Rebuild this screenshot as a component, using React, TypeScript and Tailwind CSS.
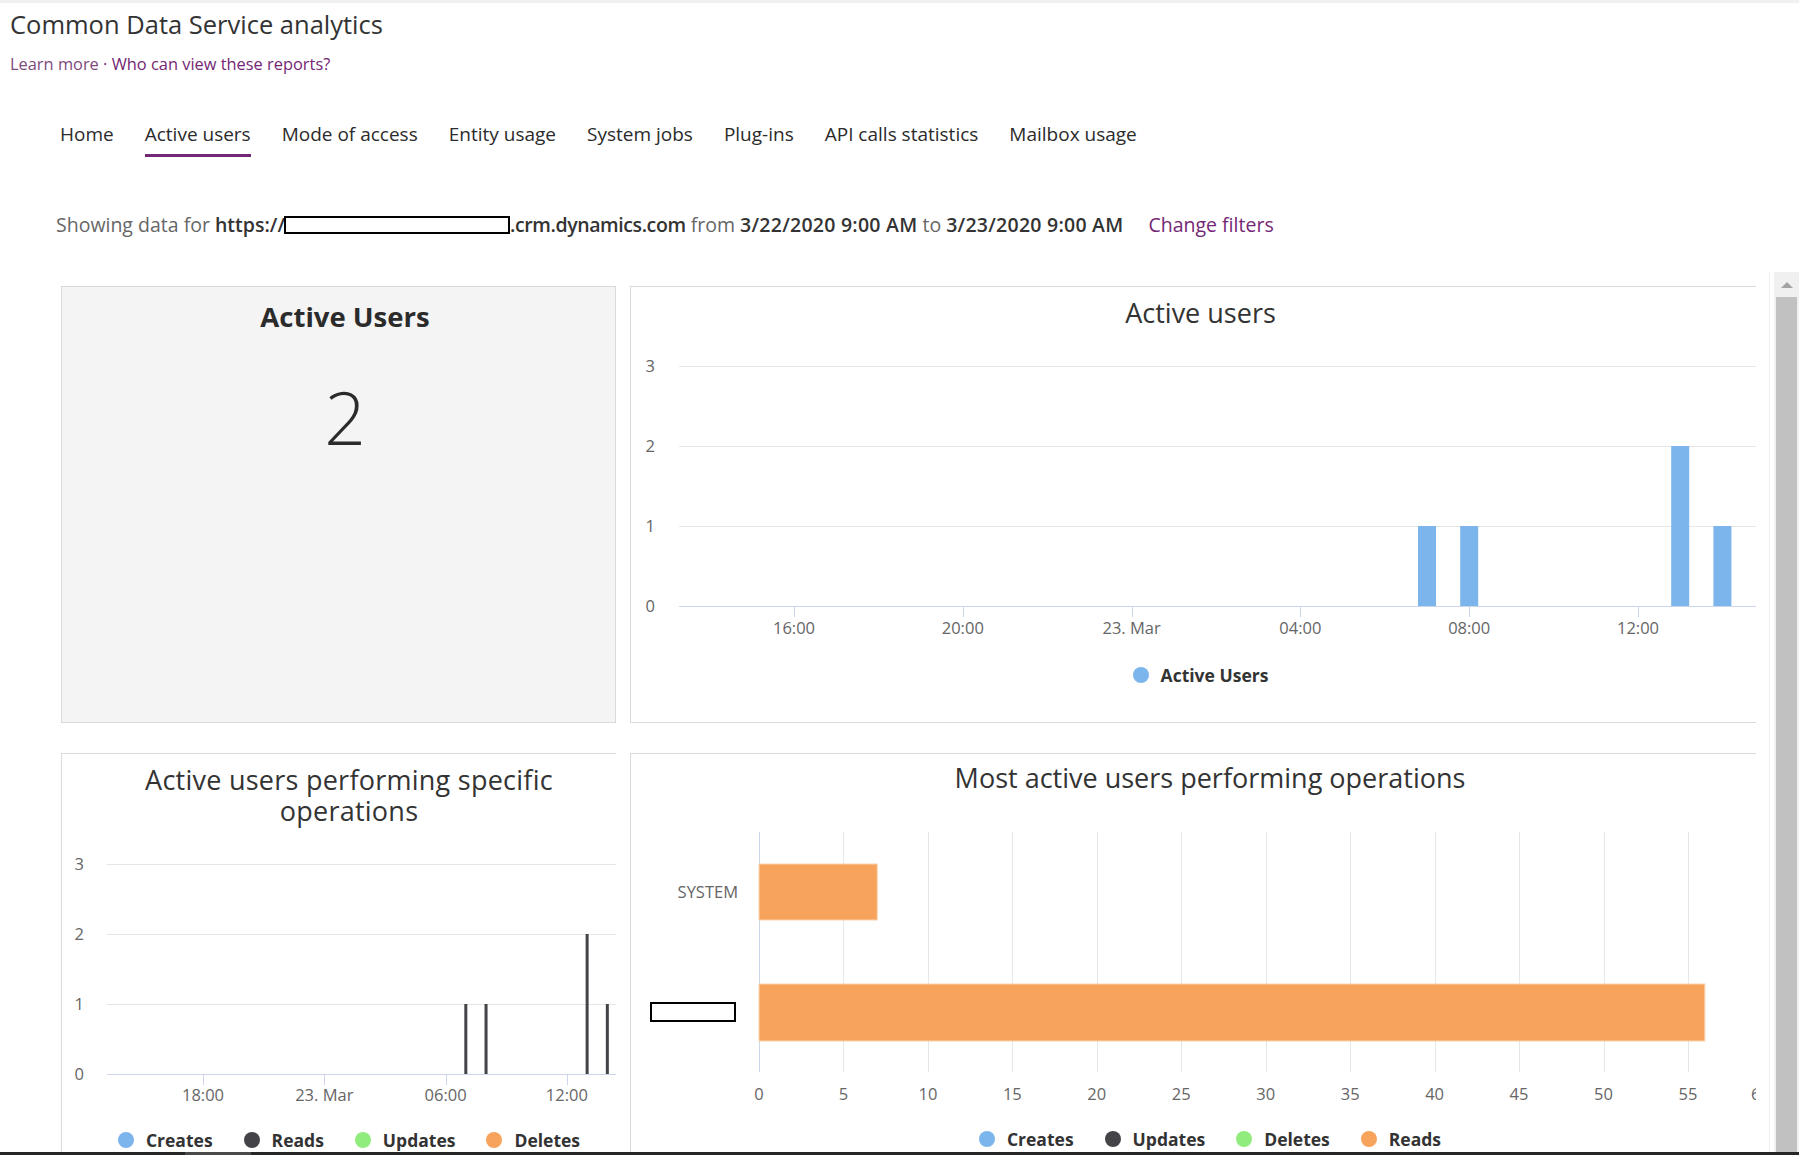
import React from "react";

const navItems = [
  "Home",
  "Active users",
  "Mode of access",
  "Entity usage",
  "System jobs",
  "Plug-ins",
  "API calls statistics",
  "Mailbox usage",
];

type LegendItem = { label: string; color: string };

function Legend({ items }: { items: LegendItem[] }) {
  return (
    <div className="flex items-center justify-center gap-[31px]">
      {items.map((it) => (
        <div key={it.label} className="flex items-center gap-[12px]">
          <span
            className="block h-4 w-4 rounded-full"
            style={{ backgroundColor: it.color }}
          />
          <span className="text-[17.5px] font-bold leading-[18px] text-[#333333]">
            {it.label}
          </span>
        </div>
      ))}
    </div>
  );
}

function ActiveUsersChart() {
  const gy = (v: number) => 26 + (3 - v) * 80;
  const ticks = ["16:00", "20:00", "23. Mar", "04:00", "08:00", "12:00"];
  const tx = (i: number) => 163 + i * 168.8;
  const hour = 42.2;
  const bars = [
    { c: tx(4) - hour, v: 1 },
    { c: tx(4), v: 1 },
    { c: tx(5) + hour, v: 2 },
    { c: tx(5) + hour * 2, v: 1 },
  ];
  return (
    <svg width="1125" height="305" className="block">
      {[3, 2, 1].map((v) => (
        <line key={v} x1={48} x2={1125} y1={gy(v) + 0.5} y2={gy(v) + 0.5} stroke="#e6e6e6" />
      ))}
      {[3, 2, 1, 0].map((v) => (
        <text key={v} x={24} y={gy(v) + 6} textAnchor="end" fontSize={16.5} fill="#666666">
          {v}
        </text>
      ))}
      {bars.map((b, i) => (
        <rect key={i} x={b.c - 9} y={gy(b.v)} width={18} height={b.v * 80} fill="#7cb5ec" />
      ))}
      <line x1={48} x2={1125} y1={266.5} y2={266.5} stroke="#ccd6eb" />
      {ticks.map((t, i) => (
        <g key={t}>
          <line x1={Math.round(tx(i)) + 0.5} x2={Math.round(tx(i)) + 0.5} y1={266} y2={277} stroke="#ccd6eb" />
          <text x={tx(i)} y={294} textAnchor="middle" fontSize={16.5} fill="#666666">
            {t}
          </text>
        </g>
      ))}
    </svg>
  );
}

function OperationsChart() {
  const gy = (v: number) => 23 + (3 - v) * 70;
  const ticks = ["18:00", "23. Mar", "06:00", "12:00"];
  const tx = (i: number) => 141 + i * 121.3;
  const hour = 20.22;
  const lines = [
    { x: tx(2) + hour, v: 1 },
    { x: tx(2) + hour * 2, v: 1 },
    { x: tx(3) + hour, v: 2 },
    { x: tx(3) + hour * 2, v: 1 },
  ];
  return (
    <svg width="600" height="270" className="block">
      {[3, 2, 1].map((v) => (
        <line key={v} x1={45} x2={600} y1={gy(v) + 0.5} y2={gy(v) + 0.5} stroke="#e6e6e6" />
      ))}
      {[3, 2, 1, 0].map((v) => (
        <text key={v} x={22} y={gy(v) + 6} textAnchor="end" fontSize={16.5} fill="#666666">
          {v}
        </text>
      ))}
      {lines.map((l, i) => (
        <rect key={i} x={l.x - 1.5} y={gy(l.v)} width={3} height={l.v * 70} fill="#434348" />
      ))}
      <line x1={45} x2={600} y1={233.5} y2={233.5} stroke="#ccd6eb" />
      {ticks.map((t, i) => (
        <g key={t}>
          <line x1={Math.round(tx(i)) + 0.5} x2={Math.round(tx(i)) + 0.5} y1={233} y2={244} stroke="#ccd6eb" />
          <text x={tx(i)} y={260} textAnchor="middle" fontSize={16.5} fill="#666666">
            {t}
          </text>
        </g>
      ))}
    </svg>
  );
}

function MostActiveChart() {
  const unit = 84.45 / 5;
  const x0 = 128;
  const steps = Array.from({ length: 12 }, (_, k) => k);
  return (
    <svg width="1125" height="300" className="block">
      {steps.map((k) => (
        <line
          key={k}
          x1={Math.round(x0 + k * 84.45) + 0.5}
          x2={Math.round(x0 + k * 84.45) + 0.5}
          y1={22}
          y2={262}
          stroke={k === 0 ? "#ccd6eb" : "#e6e6e6"}
        />
      ))}
      <rect x={x0} y={54} width={7 * unit} height={56} fill="#f7a35c" stroke="#fbd2ae" strokeWidth={1} />
      <rect x={x0} y={174} width={56 * unit} height={57} fill="#f7a35c" stroke="#fbd2ae" strokeWidth={1} />
      <text x={107} y={88} textAnchor="end" fontSize={16.5} fill="#666666">
        SYSTEM
      </text>
      <rect x={20} y={193} width={84} height={18} fill="#ffffff" stroke="#000000" strokeWidth={2} />
      {steps.map((k) => (
        <text key={k} x={x0 + k * 84.45} y={290} textAnchor="middle" fontSize={16.5} fill="#666666">
          {k * 5}
        </text>
      ))}
      <text x={1120} y={290} fontSize={16.5} fill="#666666">
        60
      </text>
    </svg>
  );
}

export default function App() {
  return (
    <div className="flex h-[1155px] w-full flex-col overflow-hidden bg-white font-['Open_Sans',sans-serif] text-[#333333]">
      {/* Header */}
      <div className="h-[272px] flex-none">
        <div className="h-[3px] bg-[#f0f0f0]" />
        <h1 className="mt-[4px] pl-[10px] text-[25.5px] font-normal leading-[34px] text-[#333333]">
          Common Data Service analytics
        </h1>
        <div className="mt-[12px] pl-[10px] text-[16.4px] leading-[22px] text-[#742774]">
          <span className="text-[#7d4a7d]">Learn more</span>
          <span> · Who can view these reports?</span>
        </div>

        <nav className="mt-[46px] flex gap-[31px] pl-[60px]">
          {navItems.map((item) => (
            <div key={item} className="flex flex-col">
              <span className="text-[19px] leading-[26px] text-[#2b2b2b]">{item}</span>
              <span
                className={
                  item === "Active users"
                    ? "mt-[7px] h-[3px] bg-[#742774]"
                    : "mt-[7px] h-[3px] bg-transparent"
                }
              />
            </div>
          ))}
        </nav>

        <div className="mt-[55px] flex items-center whitespace-pre pl-[56px] text-[19.5px] leading-[26px] text-[#666666]">
          <span>Showing data for </span>
          <span className="font-semibold text-[#333333]">https://</span>
          <span className="-ml-[1px] block h-[18px] w-[226px] border-2 border-black bg-white" />
          <span className="font-semibold tracking-[-0.4px] text-[#333333]">.crm.dynamics.com</span>
          <span> from </span>
          <span className="font-semibold tracking-[0.25px] text-[#333333]">3/22/2020 9:00 AM</span>
          <span> to </span>
          <span className="font-semibold tracking-[0.25px] text-[#333333]">3/23/2020 9:00 AM</span>
          <span className="ml-[25px] text-[#742774]">Change filters</span>
        </div>
      </div>

      {/* Scrollable report area */}
      <div className="flex h-[880px] flex-none">
        <div className="flex-1 overflow-hidden border-r border-[#efefef] pl-[61px] pt-[14px]">
          <div className="grid grid-cols-[555px_1126px] gap-x-[14px] gap-y-[30px]">
            {/* Active Users tile */}
            <div className="h-[437px] border border-[#dadada] bg-[#f4f4f4] pl-[13px] pt-[12px] text-center">
              <div className="text-[27.5px] font-bold leading-[36px] text-[#2b2b2b]">Active Users</div>
              <div className="mt-[42px] text-[73px] font-light leading-[80px] text-[#2b2b2b]">2</div>
            </div>

            {/* Active users chart */}
            <div className="h-[437px] overflow-hidden border-y border-l border-[#dadada] bg-white pt-[11px]">
              <div className="pl-[14px] text-center text-[27px] leading-[30px] text-[#333333]">
                Active users
              </div>
              <div className="mt-[12px]">
                <ActiveUsersChart />
              </div>
              <div className="mt-[21px] pl-[14px]">
                <Legend items={[{ label: "Active Users", color: "#7cb5ec" }]} />
              </div>
            </div>

            {/* Active users performing specific operations */}
            <div className="h-[399px] overflow-hidden border-l border-t border-[#dadada] bg-white pt-[10px]">
              <div className="pl-[20px] text-center text-[27px] leading-[31px] tracking-[0.25px] text-[#333333]">
                Active users performing specific
                <br />
                operations
              </div>
              <div className="mt-[15px]">
                <OperationsChart />
              </div>
              <div className="mt-[20px] pl-[20px]">
                <Legend
                  items={[
                    { label: "Creates", color: "#7cb5ec" },
                    { label: "Reads", color: "#434348" },
                    { label: "Updates", color: "#90ed7d" },
                    { label: "Deletes", color: "#f7a35c" },
                  ]}
                />
              </div>
            </div>

            {/* Most active users */}
            <div className="h-[399px] overflow-hidden border-l border-t border-[#dadada] bg-white pt-[9px]">
              <div className="pl-[33px] text-center text-[27px] leading-[30px] text-[#333333]">
                Most active users performing operations
              </div>
              <div className="mt-[17px]">
                <MostActiveChart />
              </div>
              <div className="mt-[20px] pl-[33px]">
                <Legend
                  items={[
                    { label: "Creates", color: "#7cb5ec" },
                    { label: "Updates", color: "#434348" },
                    { label: "Deletes", color: "#90ed7d" },
                    { label: "Reads", color: "#f7a35c" },
                  ]}
                />
              </div>
            </div>
          </div>
        </div>

        {/* Scrollbar */}
        <div className="ml-[4px] flex w-[25px] flex-col bg-[#f0f0f0]">
          <div className="flex h-[25px] items-center justify-center">
            <svg width="12" height="6" viewBox="0 0 12 6">
              <path d="M0 6 L6 0 L12 6 Z" fill="#a3a3a3" />
            </svg>
          </div>
          <div className="mx-[2px] flex-1 bg-[#c1c1c1]" />
        </div>
      </div>

      {/* Bottom edge */}
      <div className="flex h-[3px] flex-none">
        <div className="w-[185px] bg-[#262626]" />
        <div className="w-[66px] bg-[#4a4a4a]" />
        <div className="flex-1 bg-[#262626]" />
      </div>
    </div>
  );
}
